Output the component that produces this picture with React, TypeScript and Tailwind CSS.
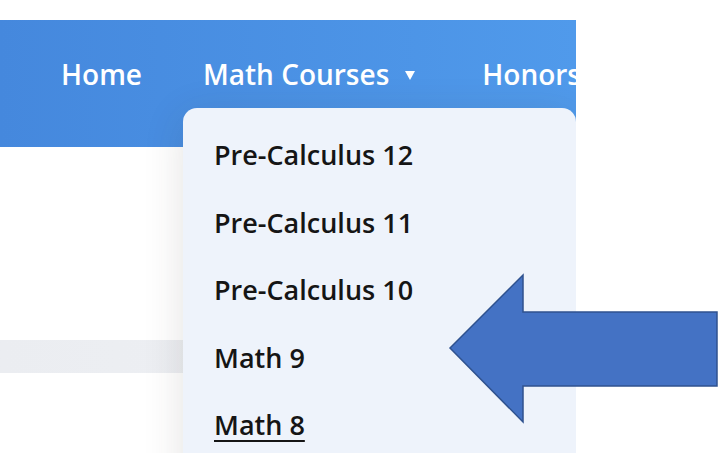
import React from "react";

const items = ["Pre-Calculus 12", "Pre-Calculus 11", "Pre-Calculus 10", "Math 9", "Math 8"];

export default function App() {
  return (
    <div className="relative w-[719px] h-[475px] overflow-hidden bg-white" style={{ fontFamily: '"Open Sans", "Noto Sans", sans-serif' }}>
      <div className="relative mt-[20px] w-[576px] h-[433px] overflow-hidden bg-white">
        <header className="h-[127px] bg-gradient-to-r from-[#4588dd] to-[#509aeb] pt-[40px] pl-[61px]">
          <nav className="flex items-start text-white font-semibold text-[28px] leading-none whitespace-nowrap">
            <span>Home</span>
            <span className="ml-[61px] flex items-center">
              Math Courses
              <svg className="ml-[16px] mt-[2px]" width="10" height="9" viewBox="0 0 10 9">
                <polygon points="0,0 10,0 5,9" fill="white" />
              </svg>
            </span>
            <span className="ml-[67px]">Honors</span>
          </nav>
        </header>
        <div className="mt-[193px] h-[33px] bg-gradient-to-r from-[#ebedf1] to-[#f0f2f6]" />
        <div className="absolute left-[183px] top-[88px] w-[393px] h-[420px] rounded-[14px] bg-[#eef3fb] shadow-[0_8px_40px_rgba(60,50,40,0.14)] pt-[13px] pl-[31px]">
          {items.map((t, i) => (
            <div
              key={t}
              className={`h-[67.5px] leading-[67.5px] text-[27px] font-semibold text-[#151515] whitespace-nowrap ${i === 4 ? "underline decoration-2 underline-offset-[5px]" : ""}`}
            >
              {t}
            </div>
          ))}
        </div>
      </div>
      <svg className="absolute left-0 top-0" width="719" height="475" viewBox="0 0 719 475">
        <polygon
          points="450,348 523,275 523,312 717,312 717,386 523,386 523,422"
          fill="#4472c4"
          stroke="#2f528f"
          strokeWidth="1.5"
          strokeLinejoin="miter"
        />
      </svg>
    </div>
  );
}
